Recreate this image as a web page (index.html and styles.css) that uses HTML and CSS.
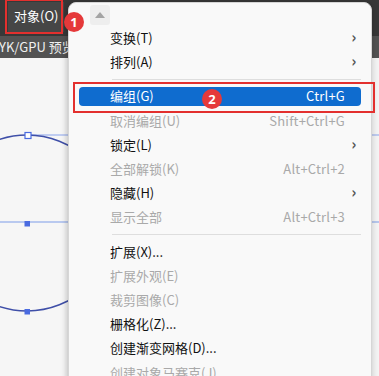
FILE: index.html
```html
<!DOCTYPE html>
<html lang="zh-CN">
<head>
<meta charset="utf-8">
<title>对象菜单</title>
<link rel="stylesheet" href="styles.css">
</head>
<body>
<div class="app">
  <div class="menubar">
    <span class="menu-title">对象(O)</span>
  </div>
  <div class="toolstrip"><span>YK/GPU 预览</span></div>
  <div class="canvas">
    <svg class="art" width="379" height="318" viewBox="0 0 379 318">
      <line x1="0" y1="164" x2="379" y2="164" stroke="#7d9be8" stroke-width="1.2"/>
      <line x1="28" y1="77" x2="379" y2="77" stroke="#8aa4ec" stroke-width="1"/>
      <circle cx="27" cy="165" r="88" fill="none" stroke="#3f4fa8" stroke-width="1.6"/>
      <rect x="25" y="74.5" width="6" height="6" fill="#fff" stroke="#4a6be0" stroke-width="1.2"/>
      <rect x="24.5" y="163" width="5.5" height="5.5" fill="#4a6be0"/>
      <rect x="24.5" y="251" width="5.5" height="5.5" fill="#4a6be0"/>
    </svg>
  </div>

  <div class="menu">
    <div class="scroll-up"><span class="scroll-box"><span class="tri"></span></span></div>
    <div class="item"><span class="label">变换(T)</span><span class="chev">›</span></div>
    <div class="item"><span class="label">排列(A)</span><span class="chev">›</span></div>
    <div class="sep"></div>
    <div class="item active"><span class="label">编组(G)</span><span class="key">Ctrl+G</span></div>
    <div class="item off"><span class="label">取消编组(U)</span><span class="key">Shift+Ctrl+G</span></div>
    <div class="item"><span class="label">锁定(L)</span><span class="chev">›</span></div>
    <div class="item off"><span class="label">全部解锁(K)</span><span class="key">Alt+Ctrl+2</span></div>
    <div class="item"><span class="label">隐藏(H)</span><span class="chev">›</span></div>
    <div class="item off"><span class="label">显示全部</span><span class="key">Alt+Ctrl+3</span></div>
    <div class="sep"></div>
    <div class="item"><span class="label">扩展(X)...</span></div>
    <div class="item off"><span class="label">扩展外观(E)</span></div>
    <div class="item off"><span class="label">裁剪图像(C)</span></div>
    <div class="item"><span class="label">栅格化(Z)...</span></div>
    <div class="item"><span class="label">创建渐变网格(D)...</span></div>
    <div class="item off"><span class="label">创建对象马赛克(J)...</span></div>
  </div>

  <div class="mark mark-1"></div>
  <div class="mark mark-2"></div>
  <div class="badge badge-1">1</div>
  <div class="badge badge-2">2</div>
</div>
</body>
</html>
```

FILE: styles.css
```css
* { box-sizing: border-box; }
html, body { margin: 0; padding: 0; }
body {
  font-family: "Noto Sans CJK SC", "Noto Sans", sans-serif;
  background: #f4f4f4;
}
.app {
  position: relative;
  width: 379px;
  height: 376px;
  overflow: hidden;
  display: flex;
  flex-direction: column;
}
.menubar {
  height: 36px;
  background: #383838;
  display: flex;
  align-items: flex-start;
  flex: none;
}
.menu-title {
  margin-left: 8px;
  margin-top: 2px;
  height: 30px;
  padding: 5px 6px 0 6px;
  background: #464646;
  color: #ffffff;
  font-size: 13px;
  line-height: 18px;
}
.toolstrip {
  height: 22px;
  background: #535353;
  color: #f0f0f0;
  font-size: 13px;
  line-height: 22px;
  flex: none;
  white-space: nowrap;
}
.toolstrip span { margin-left: -1px; }
.canvas {
  flex: 1;
  background: #f6f6f6;
}
.art { display: block; }

.menu {
  position: absolute;
  left: 68px;
  top: 2px;
  width: 304px;
  height: 400px;
  background: #f9f9f9;
  border: 1px solid #d6d6d6;
  border-radius: 8px;
  box-shadow: -2px 0 4px rgba(0,0,0,0.08), 0 2px 8px rgba(0,0,0,0.18);
  display: flex;
  flex-direction: column;
  font-size: 13px;
  color: #111111;
}
.scroll-up {
  height: 23px;
  flex: none;
  padding: 2px 0 0 21px;
}
.scroll-box {
  display: flex;
  width: 20px;
  height: 20px;
  background: #eeeeee;
  border-radius: 3px;
  align-items: center;
  justify-content: center;
}
.tri {
  width: 0;
  height: 0;
  border-left: 5.5px solid transparent;
  border-right: 5.5px solid transparent;
  border-bottom: 6px solid #a4a4a4;
  margin-top: -1px;
}
.item {
  flex: none;
  height: 18.2px;
  margin: 3px 10px;
  padding: 0 16px 0 31px;
  display: flex;
  align-items: center;
  justify-content: space-between;
  border-radius: 4px;
  line-height: 18px;
  white-space: nowrap;
}
.item.off { color: #a9a9a9; }
.item.active {
  background: #0f6ccf;
  color: #ffffff;
}
.key { letter-spacing: 0.2px; }
.chev {
  font-family: "DejaVu Sans", sans-serif;
  font-size: 15px;
  color: #555;
  margin-right: -12px;
  font-weight: bold;
  transform: scaleX(0.8);
}
.sep {
  flex: none;
  height: 10px;
  margin: 0 10px 0 43px;
  display: flex;
  align-items: center;
}
.sep::after {
  content: "";
  flex: 1;
  height: 1px;
  background: #dedede;
}

.mark {
  position: absolute;
  border: 2.5px solid #e3302e;
}
.mark-1 { left: 5px; top: -1px; width: 58px; height: 35px; }
.mark-2 { left: 73px; top: 82px; width: 302px; height: 31px; }

.badge {
  position: absolute;
  width: 20px;
  height: 20px;
  border-radius: 50%;
  background: #e5393a;
  color: #fff;
  font-family: "Noto Sans", sans-serif;
  font-weight: bold;
  font-size: 13px;
  line-height: 20px;
  text-align: center;
}
.badge-1 { left: 64px; top: 12px; }
.badge-2 { left: 202px; top: 89px; }
```
